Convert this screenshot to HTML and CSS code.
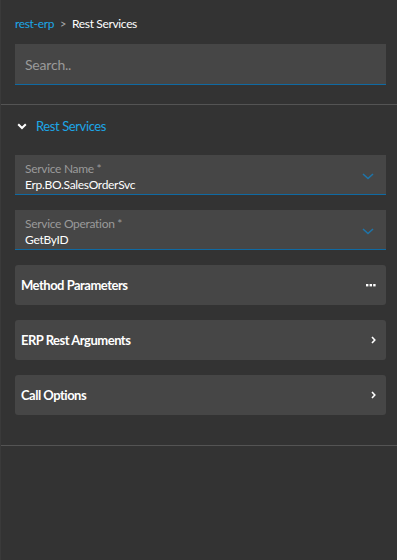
FILE: index.html
```html
<html>
<head>
<link rel="stylesheet" href="styles.css">
</head>
<body>
  <div class="panel">
    <div class="top">
      <div class="crumbs">
        <a class="crumb-link">rest-erp</a>
        <span class="crumb-sep">&gt;</span>
        <span class="crumb-cur">Rest Services</span>
      </div>
      <div class="search">
        <input class="search-input" type="text" placeholder="Search..">
      </div>
    </div>

    <div class="section">
      <div class="section-head">
        <svg class="head-chev" width="10" height="7" viewBox="0 0 10 7">
          <path d="M1.2 1.2 L5 5 L8.8 1.2" fill="none" stroke="#fff" stroke-width="2"/>
        </svg>
        <span class="section-title">Rest Services</span>
      </div>

      <div class="field">
        <div class="field-text">
          <div class="field-label">Service Name *</div>
          <div class="field-value">Erp.BO.SalesOrderSvc</div>
        </div>
        <svg class="field-chev" width="12" height="7" viewBox="0 0 12 7">
          <path d="M1 1 L6 5.5 L11 1" fill="none" stroke="#1f74a8" stroke-width="1.6"/>
        </svg>
      </div>

      <div class="field">
        <div class="field-text">
          <div class="field-label">Service Operation *</div>
          <div class="field-value">GetByID</div>
        </div>
        <svg class="field-chev" width="12" height="7" viewBox="0 0 12 7">
          <path d="M1 1 L6 5.5 L11 1" fill="none" stroke="#1f74a8" stroke-width="1.6"/>
        </svg>
      </div>

      <div class="card">
        <span class="card-title">Method Parameters</span>
        <svg class="card-icon" width="10" height="3" viewBox="0 0 10 3">
          <rect x="0" y="0" width="2.4" height="2.4" fill="#fff"/>
          <rect x="3.6" y="0" width="2.4" height="2.4" fill="#fff"/>
          <rect x="7.2" y="0" width="2.4" height="2.4" fill="#fff"/>
        </svg>
      </div>

      <div class="card">
        <span class="card-title">ERP Rest Arguments</span>
        <svg class="card-icon" width="5" height="8" viewBox="0 0 5 8">
          <path d="M1 1 L3.8 4 L1 7" fill="none" stroke="#fff" stroke-width="1.6"/>
        </svg>
      </div>

      <div class="card">
        <span class="card-title">Call Options</span>
        <svg class="card-icon" width="5" height="8" viewBox="0 0 5 8">
          <path d="M1 1 L3.8 4 L1 7" fill="none" stroke="#fff" stroke-width="1.6"/>
        </svg>
      </div>
    </div>
  </div>
</body>
</html>
```

FILE: styles.css
```css
html, body {
  margin: 0;
  padding: 0;
  background: #333333;
}

body {
  font-family: "Source Sans Pro", Lato, "Noto Sans", sans-serif;
  color: #ffffff;
  width: 397px;
  height: 560px;
  overflow: hidden;
}

.panel {
  border-left: 1px solid #3a3a3a;
  height: 560px;
}

.top {
  padding: 15px 11px 19px 14px;
  border-bottom: 1px solid #545454;
}

.crumbs {
  display: flex;
  align-items: center;
  gap: 6px;
  font-size: 12px;
  letter-spacing: -0.35px;
  height: 16px;
}

.crumb-link {
  color: #1ca6e6;
}

.crumb-sep {
  color: #aaaaaa;
  font-size: 11px;
}

.crumb-cur {
  color: #ffffff;
}

.search {
  margin-top: 13px;
  background: #464646;
  border-bottom: 1px solid #0f6aa3;
  height: 40px;
  display: flex;
  align-items: center;
}

.search-input {
  background: transparent;
  border: 0;
  outline: none;
  font-family: inherit;
  font-size: 14px;
  letter-spacing: -0.2px;
  color: #ffffff;
  padding: 0 10px;
  width: 100%;
}

.search-input::placeholder {
  color: #9a9a9a;
}

.section {
  padding: 13px 11px 30px 14px;
  border-bottom: 1px solid #545454;
  display: flex;
  flex-direction: column;
  gap: 15px;
}

.section-head {
  display: flex;
  align-items: center;
  height: 16px;
  padding-left: 2px;
  margin-bottom: 6px;
}

.head-chev {
  margin-right: 9px;
}

.section-title {
  color: #1ca6e6;
  font-size: 13px;
  letter-spacing: -0.4px;
}

.field {
  background: #464646;
  border-bottom: 1px solid #0f6aa3;
  height: 40px;
  box-sizing: border-box;
  display: flex;
  align-items: center;
  padding: 0 12px 0 10px;
}

.field-text {
  flex: 1;
  padding-top: 4px;
  letter-spacing: -0.3px;
}

.field-label {
  color: #9a9a9a;
  font-size: 12px;
  line-height: 16px;
}

.field-value {
  color: #ffffff;
  font-size: 12px;
  line-height: 15px;
}

.field-chev {
  margin-top: 4px;
}

.card {
  background: #464646;
  border-radius: 3px;
  height: 40px;
  display: flex;
  align-items: center;
  padding: 0 9px 0 6px;
}

.card-title {
  flex: 1;
  font-size: 13px;
  font-weight: bold;
  letter-spacing: -0.5px;
}

.card-icon {
  margin-right: 1px;
}
```
